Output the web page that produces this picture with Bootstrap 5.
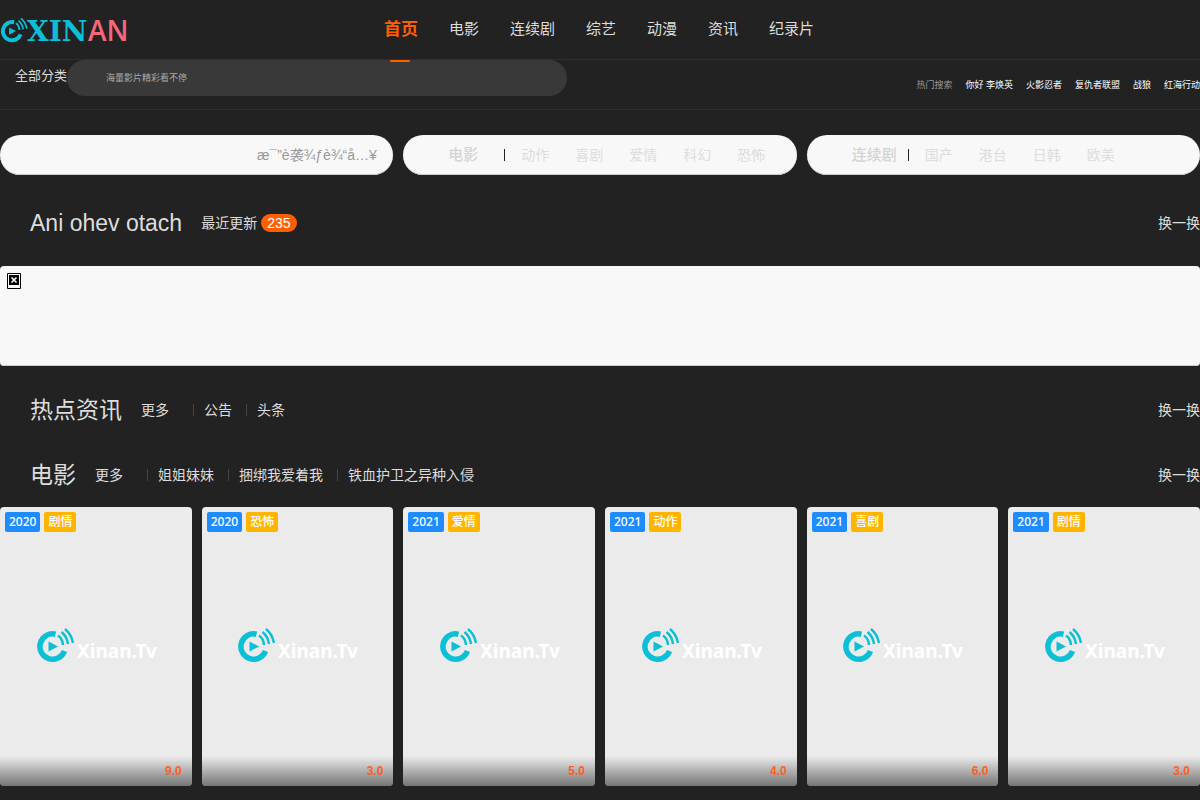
<!DOCTYPE html>
<html lang="zh-CN">
<head>
<meta charset="utf-8">
<meta name="viewport" content="width=device-width, initial-scale=1">
<title>XINAN</title>
<link href="https://cdn.jsdelivr.net/npm/bootstrap@5.3.0/dist/css/bootstrap.min.css" rel="stylesheet">
<style>
body{background:#222;color:#ddd;font:14px/20px "Liberation Sans","Noto Sans CJK SC",sans-serif;overflow-x:hidden}
a{color:inherit;text-decoration:none}
.topbar{height:60px;border-bottom:1px solid #2e2e2e}
.brand-col{width:32%}
.menu{gap:31px;font-size:15px;line-height:58px}
.menu .active{color:#ff5f00;font-size:17px;line-height:60px;font-weight:700;position:relative}
.menu .active::after{content:"";position:absolute;left:50%;top:60px;width:20px;height:2px;margin-left:-11px;border-radius:1px;background:#ff5f00;z-index:2}
.subbar{height:50px;border-bottom:1px solid #2e2e2e;font-size:13px}
.subbar label{padding:6px 0 0 15px}
.search{width:500px;height:36px;padding:0 39px;border:0;border-radius:18px;background:#393939;color:#aaa;font-size:9px}
.search::placeholder{color:#aaa}
.hot{font-size:9px;gap:13px;color:#fff}
.hot span{color:#999}
.trio{display:grid;grid-template-columns:repeat(3,minmax(0,1fr));gap:10px;margin-top:25px}
.pill{height:40px;border-radius:20px;background:#f8f8f8;box-shadow:inset 0 -1px #ccc;color:#ddd}
.pill input{width:100%;height:40px;border:0;background:transparent;padding:0 16px 0 257px;color:#999;font-size:14px}
.pill input::placeholder{color:#999}
.kind{padding-left:45px}
.kind h2{width:57px;margin:0;font-size:15px;line-height:12px;font-weight:500;color:#d4d4d4;border-right:1px solid #222;white-space:nowrap}
.kind ul{gap:26px;padding-left:16px}
.heading{height:65px;padding-left:30px}
.heading h3{font-size:23px;line-height:32px;font-weight:400;margin:0 19px 0 0}
.update{margin:15px 0 11px}
.news{margin-top:11px}
.count{background:#ff5f00;color:#fff;border-radius:10px;padding:0 6px;line-height:18px;margin-left:4px}
.topics{gap:14px;margin-left:24px}
.topics li{line-height:12px;border-left:1px solid #444;padding-left:10px}
.promo{height:100px;border-radius:4px;background:#f8f8f8;padding:7px;box-shadow:inset 0 -1px #ccc}
.promo button{display:block;padding:0;border:0;background:none}
.films{display:grid;grid-template-columns:repeat(6,minmax(0,1fr));gap:10px}
.poster{aspect-ratio:192/279;border-radius:4px;background:#ebebeb;overflow:hidden;position:relative}
.tags{left:5px;top:5px;gap:4px;font-family:"Noto Sans","Noto Sans CJK SC",sans-serif;font-size:12px;font-weight:500;color:#fff}
.tags span{border-radius:2px;padding:0 4px;line-height:20px}
.year{background:#1e8cff}
.genre{background:#ffb400}
.score{height:30px;line-height:30px;padding-right:10px;font-size:12px;font-weight:700;color:#ff5f22;background:linear-gradient(transparent,rgba(0,0,0,.5))}
</style>
</head>
<body>
<svg width="0" height="0" class="position-absolute" aria-hidden="true">
<symbol id="mark-c" viewBox="0 0 40 36">
<g fill="none" stroke="#0bbfd6">
<path d="M19.500 7.200A12.700 12.700 0 1 0 28.500 24" stroke-width="5.500"/>
<path d="M22 8.500Q26.500 11.500 27 18M25.500 5Q31 9.500 32 17M29 2Q35.500 7.500 37 16" stroke-width="2.400"/>
</g>
<path d="M12.500 14.500L22 19.500L12.500 24.500Z" fill="#0bbfd6"/>
</symbol>
</svg>
<header>
<div class="topbar d-flex">
<div class="brand-col d-flex align-items-center">
<a href="#" aria-label="XINAN"><svg class="d-block" width="136" height="44" viewBox="0 0 136 44">
<use href="#mark-c" x="0" y="9" width="29" height="26"/>
<text x="27" y="33" fill="#0bbfd6" font-family="DejaVu Serif" font-weight="700" font-size="28">XIN</text>
<text x="88" y="33" fill="#f5687a" font-family="Open Sans" font-weight="600" font-size="28">AN</text>
</svg></a>
</div>
<nav><ul class="menu list-unstyled d-flex mb-0">
<li><a class="active d-block" href="#">首页</a></li><li><a href="#">电影</a></li><li><a href="#">连续剧</a></li><li><a href="#">综艺</a></li><li><a href="#">动漫</a></li><li><a href="#">资讯</a></li><li><a href="#">纪录片</a></li>
</ul></nav>
</div>
<div class="subbar d-flex align-items-start overflow-hidden">
<label for="q" class="text-nowrap">全部分类</label>
<input id="q" class="search" type="text" placeholder="海量影片精彩看不停">
<div class="hot d-flex ms-auto text-nowrap align-self-center"><span>热门搜索</span><a href="#">你好 李焕英</a><a href="#">火影忍者</a><a href="#">复仇者联盟</a><a href="#">战狼</a><a href="#">红海行动</a></div>
</div>
</header>
<main>
<div class="trio">
<div class="pill"><input type="text" aria-label="搜索" placeholder="æ¯”è袭¾ƒè¾“å…¥é"></div>
<div class="pill kind d-flex align-items-center"><h2>电影</h2><ul class="list-unstyled d-flex mb-0"><li><a href="#">动作</a></li><li><a href="#">喜剧</a></li><li><a href="#">爱情</a></li><li><a href="#">科幻</a></li><li><a href="#">恐怖</a></li></ul></div>
<div class="pill kind d-flex align-items-center"><h2>连续剧</h2><ul class="list-unstyled d-flex mb-0"><li><a href="#">国产</a></li><li><a href="#">港台</a></li><li><a href="#">日韩</a></li><li><a href="#">欧美</a></li></ul></div>
</div>
<div class="heading update d-flex align-items-center"><h3>Ani ohev otach</h3><span>最近更新</span><span class="count">235</span><a class="ms-auto" href="#">换一换</a></div>
<div class="promo"><button type="button" aria-label="关闭"><svg class="d-block" width="14" height="16"><path d="M.5.5h13v15H.5z" fill="#fff" stroke="#000"/><path d="M2 2h10v10H2z"/><path d="M4.500 4.500l5 5M9.500 4.500l-5 5" stroke="#fff" stroke-width="1.500"/></svg></button></div>
<div class="heading news d-flex align-items-center"><h3>热点资讯</h3><a href="#">更多</a><ul class="topics list-unstyled d-flex mb-0"><li><a href="#">公告</a></li><li><a href="#">头条</a></li></ul><a class="ms-auto" href="#">换一换</a></div>
<div class="heading d-flex align-items-center"><h3>电影</h3><a href="#">更多</a><ul class="topics list-unstyled d-flex mb-0"><li><a href="#">姐姐妹妹</a></li><li><a href="#">捆绑我爱着我</a></li><li><a href="#">铁血护卫之异种入侵</a></li></ul><a class="ms-auto" href="#">换一换</a></div>
<div class="films" id="films"></div>
</main>
<script>
const films=[["2020","剧情","9.0"],["2020","恐怖","3.0"],["2021","爱情","5.0"],["2021","动作","4.0"],["2021","喜剧","6.0"],["2021","剧情","3.0"]];
document.getElementById("films").innerHTML=films.map(([year,genre,score])=>`<a href="#" class="poster d-flex flex-column">
<span class="tags position-absolute d-flex"><span class="year">${year}</span><span class="genre">${genre}</span></span>
<svg class="m-auto" width="126" height="38" viewBox="-3 0 126 38"><use href="#mark-c" width="40" height="36"/><text x="41" y="31" fill="#fff" font-family="Noto Sans" font-weight="700" font-size="19">Xinan.Tv</text></svg>
<span class="score position-absolute bottom-0 w-100 text-end">${score}</span></a>`).join("");
</script>
<script src="https://cdn.jsdelivr.net/npm/bootstrap@5.3.0/dist/js/bootstrap.bundle.min.js"></script>
</body>
</html>
